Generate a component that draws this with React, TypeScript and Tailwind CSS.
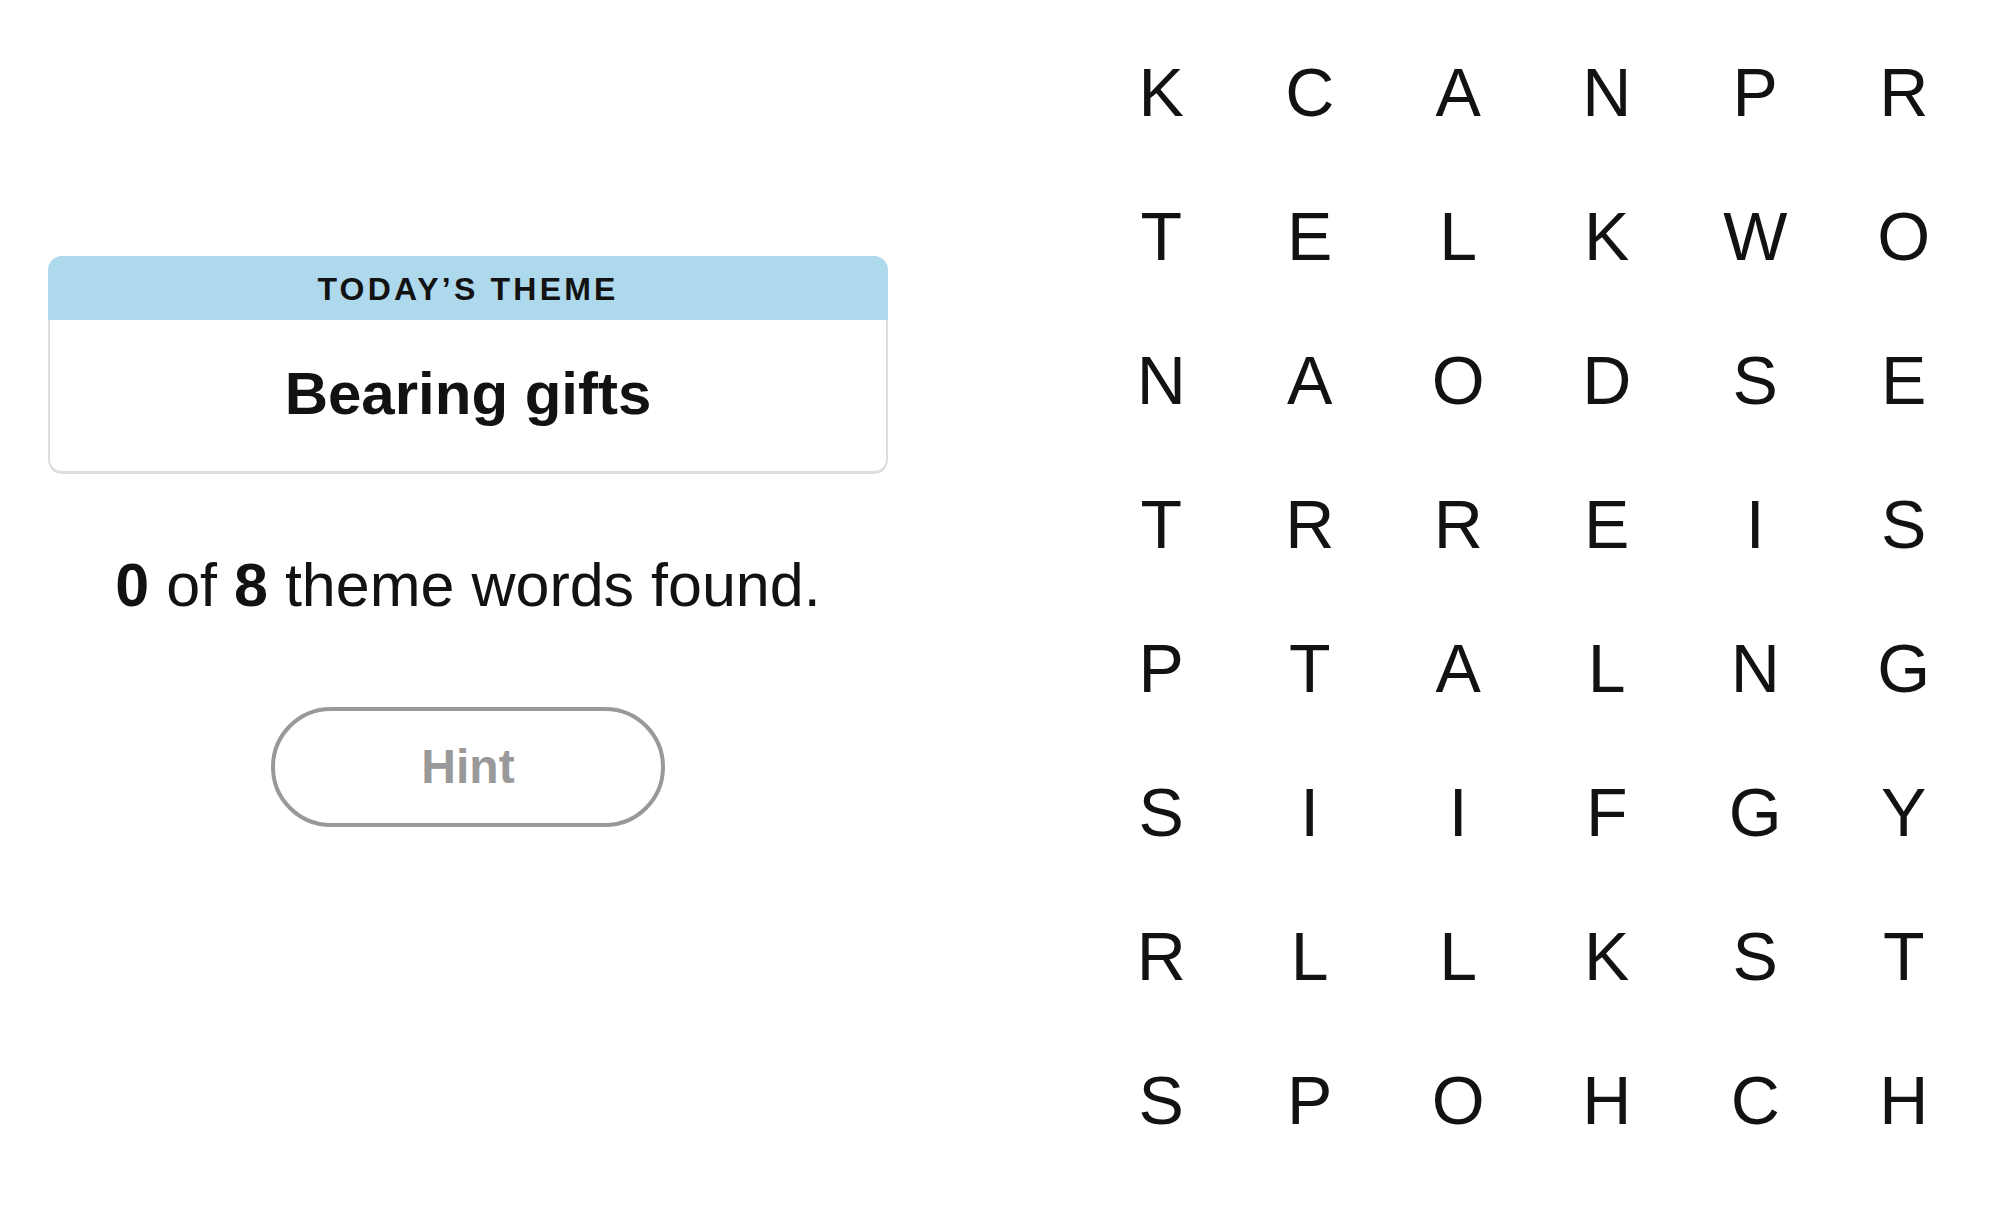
import React from "react";

const rows = [
  "KCANPR",
  "TELKWO",
  "NAODSE",
  "TRREIS",
  "PTALNG",
  "SIIFGY",
  "RLLKST",
  "SPOHCH",
];

const App = () => {
  return (
    <div className="flex w-[2000px] h-[1208px] bg-white text-[#121212] font-['Liberation_Sans',Arial,sans-serif]">
      {/* left side: theme + progress */}
      <div className="flex w-[936px] flex-col items-center px-12 pt-[256px]">
        <div className="w-full overflow-hidden rounded-[14px]">
          <div className="h-[64px] bg-[#aed8eb] text-center text-[32px] font-bold leading-[66px] tracking-[0.1em]">
            TODAY’S THEME
          </div>
          <div className="flex h-[154px] items-center justify-center rounded-b-[14px] border-x-2 border-b-[3px] border-[#dcdcdc] pb-[4px]">
            <span className="text-[60px] font-bold leading-none">
              Bearing gifts
            </span>
          </div>
        </div>

        <p className="mt-[75px] text-[61px] leading-[72px]">
          <b>0</b> of <b>8</b> theme words found.
        </p>

        <button className="mt-[86px] h-[120px] w-[394px] rounded-full border-4 border-[#999999] text-[48px] font-bold text-[#999999]">
          Hint
        </button>
      </div>

      {/* right side: letter board */}
      <div className="ml-[151px] grid w-[891px] grid-cols-6 content-start pt-[20px]">
        {rows.map((row, r) =>
          row.split("").map((ch, c) => (
            <div
              key={`${r}-${c}`}
              className="flex h-[144px] items-center justify-center text-[68px] leading-[144px]"
            >
              {ch}
            </div>
          ))
        )}
      </div>
    </div>
  );
};

export default App;
